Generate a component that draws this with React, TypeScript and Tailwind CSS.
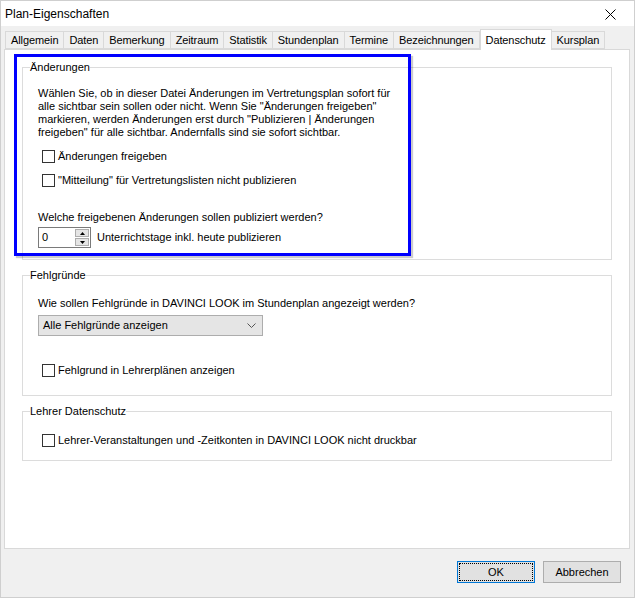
import React from 'react';

const tabs = [
  'Allgemein',
  'Daten',
  'Bemerkung',
  'Zeitraum',
  'Statistik',
  'Stundenplan',
  'Termine',
  'Bezeichnungen',
  'Datenschutz',
  'Kursplan',
];

const Check: React.FC<{ label: string }> = ({ label }) => (
  <label className="flex items-center gap-[3px] h-[16px]">
    <span className="w-[13px] h-[13px] border border-[#333] bg-white shrink-0" />
    <span>{label}</span>
  </label>
);

const Group: React.FC<{ title: string; className?: string; children: React.ReactNode }> = ({
  title,
  className,
  children,
}) => (
  <fieldset className={`border border-[#dcdcdc] mx-[17px] px-[15px] ${className ?? ''}`}>
    <legend className="ml-[-8px] px-0 leading-[14px]">{title}</legend>
    {children}
  </fieldset>
);

export default function App() {
  return (
    <div
      className="w-[635px] h-[598px] bg-[#f0f0f0] border border-[#cfcfcf] flex flex-col relative text-[11px] text-black overflow-hidden"
      style={{ fontFamily: '"Liberation Sans", Arial, sans-serif' }}
    >
      {/* Titelleiste */}
      <div className="h-[25px] bg-white flex items-center justify-between pl-[4px] pr-[18px] shrink-0">
        <span className="text-[12px]">Plan-Eigenschaften</span>
        <svg width="11" height="11" viewBox="0 0 11 11" className="mt-[1px]">
          <path d="M0.5 0.5 L10.5 10.5 M10.5 0.5 L0.5 10.5" stroke="#000" strokeWidth="1" />
        </svg>
      </div>

      {/* Reiter */}
      <div className="flex items-end pl-[4px] pt-[3px] h-[23px] shrink-0 relative z-10 tracking-[-0.1px]">
        {tabs.map((t) => {
          const active = t === 'Datenschutz';
          return active ? (
            <div
              key={t}
              className="h-[21px] px-[5px] bg-white border border-[#d9d9d9] border-b-0 mb-[-1px] flex items-start pt-[2px]"
            >
              {t}
            </div>
          ) : (
            <div
              key={t}
              className="h-[18px] px-[5px] bg-[#f0f0f0] border border-[#d9d9d9] border-l-0 first:border-l flex items-center"
            >
              {t}
            </div>
          );
        })}
      </div>

      {/* Inhalt */}
      <div className="mx-[3px] w-[626px] h-[500px] bg-white border border-[#d9d9d9] shrink-0 pt-[10px]">
        <Group title="Änderungen" className="h-[200px]">
          <p className="mt-[13px] leading-[13px]">
            Wählen Sie, ob in dieser Datei Änderungen im Vertretungsplan sofort für
            <br />
            alle sichtbar sein sollen oder nicht. Wenn Sie "Änderungen freigeben"
            <br />
            markieren, werden Änderungen erst durch "Publizieren | Änderungen
            <br />
            freigeben" für alle sichtbar. Andernfalls sind sie sofort sichtbar.
          </p>
          <div className="mt-[9px] ml-[4px] flex flex-col gap-[8px]">
            <Check label="Änderungen freigeben" />
            <Check label={'"Mitteilung" für Vertretungslisten nicht publizieren'} />
          </div>
          <p className="mt-[23px] leading-[13px]">Welche freigebenen Änderungen sollen publiziert werden?</p>
          <div className="mt-[3px] flex items-center gap-[6px]">
            <div className="w-[53px] h-[21px] border border-[#7a7a7a] bg-white flex items-center">
              <span className="pl-[3px] flex-1">0</span>
              <div className="w-[16px] h-full flex flex-col gap-[1px] p-[1px]">
                <div className="flex-1 bg-[#e5e5e5] border border-[#adadad] flex items-center justify-center">
                  <svg width="5" height="3" viewBox="0 0 5 3">
                    <path d="M2.5 0 L5 3 L0 3 Z" fill="#000" />
                  </svg>
                </div>
                <div className="flex-1 bg-[#e5e5e5] border border-[#adadad] flex items-center justify-center">
                  <svg width="5" height="3" viewBox="0 0 5 3">
                    <path d="M0 0 L5 0 L2.5 3 Z" fill="#000" />
                  </svg>
                </div>
              </div>
            </div>
            <span>Unterrichtstage inkl. heute publizieren</span>
          </div>
        </Group>

        <Group title="Fehlgründe" className="mt-[8px] h-[128px]">
          <p className="mt-[15px] leading-[13px]">
            Wie sollen Fehlgründe in DAVINCI LOOK im Stundenplan angezeigt werden?
          </p>
          <div className="mt-[5px] w-[225px] h-[21px] bg-[#e5e5e5] border border-[#adadad] flex items-center justify-between pl-[4px] pr-[6px]">
            <span>Alle Fehlgründe anzeigen</span>
            <svg width="9" height="5" viewBox="0 0 9 5">
              <path d="M0.5 0.5 L4.5 4.5 L8.5 0.5" stroke="#555" strokeWidth="1" fill="none" />
            </svg>
          </div>
          <div className="mt-[26px] ml-[4px]">
            <Check label="Fehlgrund in Lehrerplänen anzeigen" />
          </div>
        </Group>

        <Group title="Lehrer Datenschutz" className="mt-[8px] h-[57px]">
          <div className="mt-[14px] ml-[4px]">
            <Check label="Lehrer-Veranstaltungen und -Zeitkonten in DAVINCI LOOK nicht druckbar" />
          </div>
        </Group>
      </div>

      {/* Schaltflächen */}
      <div className="flex justify-end gap-[8px] pr-[13px] mt-[12px]">
        <button className="w-[78px] h-[22px] bg-[#e1e1e1] border border-[#0078d7] p-[1px]">
          <span className="w-full h-full flex items-center justify-center border border-dotted border-black">OK</span>
        </button>
        <button className="w-[78px] h-[22px] bg-[#e1e1e1] border border-[#adadad]">Abbrechen</button>
      </div>

      {/* Markierung */}
      <div className="absolute left-[13px] top-[53px] w-[397px] h-[202px] border-[3px] border-[#0000ff] shadow-[2px_2px_1px_rgba(0,0,0,0.2)] pointer-events-none" />
    </div>
  );
}
